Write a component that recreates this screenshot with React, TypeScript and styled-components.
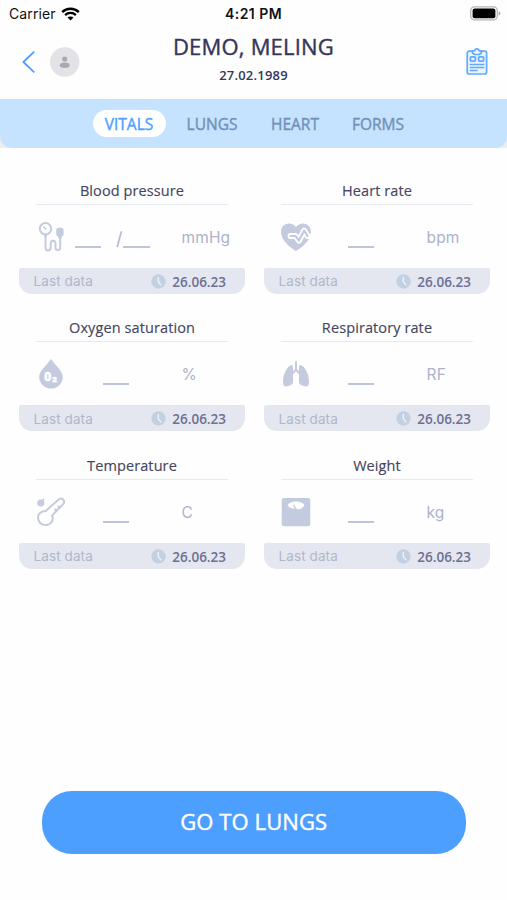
import React from "react";
import styled, { createGlobalStyle } from "styled-components";

const ink = "#35365a";
const blue = "#4d9fff";
const pale = "#c5cbdf";

const GlobalStyle = createGlobalStyle`
  * { box-sizing: border-box; }
  body { margin: 0; background: #fff; }
`;

const Screen = styled.main`
  width: 507px;
  height: 900px;
  background: #fefefe;
  display: flex;
  flex-direction: column;
  overflow: hidden;
  font-family: "Open Sans", sans-serif;
  svg { display: block; flex: none; }
`;

const StatusBar = styled.div`
  height: 27px;
  display: grid;
  grid-template-columns: 1fr auto 1fr;
  align-items: center;
  padding: 0 6px 0 9px;
  font-family: Inter, sans-serif;
  font-size: 14px;
  color: #111;
`;

const Carrier = styled.div`
  display: flex;
  align-items: center;
  gap: 5.5px;
  letter-spacing: 0.1px;
`;

const Clock = styled.div`
  font-weight: 600;
  letter-spacing: 0.45px;
  padding-right: 3px;
`;

const Battery = styled.div`
  justify-self: end;
`;

const Header = styled.header`
  height: 71.5px;
  display: grid;
  grid-template-columns: 80px 1fr 80px;
  padding-top: 7px;
`;

const HeaderLeft = styled.div`
  display: flex;
  align-items: center;
  gap: 14px;
  height: 55px;
  padding-left: 21px;
`;

const HeaderRight = styled.div`
  display: flex;
  align-items: center;
  justify-content: flex-end;
  height: 54px;
  padding-right: 19px;
`;

const Person = styled.div`
  text-align: center;
  color: ${ink};
`;

const Name = styled.h1`
  margin: -1px 0 0;
  font-size: 22px;
  line-height: 27px;
  font-weight: 400;
  letter-spacing: 0.2px;
  -webkit-text-stroke: 0.4px currentColor;
`;

const Birth = styled.div`
  margin-top: 6px;
  font-size: 13px;
  line-height: 18px;
  font-weight: 600;
  letter-spacing: 0.2px;
`;

const TabsBack = styled.div`
  background: #ededf0;
  height: 49px;
`;

const Tabs = styled.nav`
  height: 49px;
  background: #c5e3ff;
  border-radius: 0 0 12px 12px;
  display: flex;
  align-items: center;
  padding-left: 92.5px;
`;

const Tab = styled.button<{ $active?: boolean; $width: number }>`
  border: 0;
  padding: 0;
  width: ${(p) => p.$width}px;
  height: 27px;
  border-radius: 14px;
  background: ${(p) => (p.$active ? "#fff" : "transparent")};
  color: ${(p) => (p.$active ? blue : "#7191b9")};
  font: 400 15.5px/28px "Open Sans", sans-serif;
  -webkit-text-stroke: 0.4px currentColor;
  text-align: center;
`;

const Cards = styled.section`
  display: grid;
  grid-template-columns: 226.5px 226.5px;
  grid-auto-rows: 119px;
  column-gap: 18.5px;
  row-gap: 18.7px;
  padding: 27px 18.5px 0;
`;

const Card = styled.article`
  display: flex;
  flex-direction: column;
`;

const CardTitle = styled.h2`
  margin: 0 17px 0 17.5px;
  height: 30px;
  border-bottom: 1.5px solid #e6e9f0;
  color: #44465f;
  font-size: 14.5px;
  line-height: 32px;
  font-weight: 400;
  text-align: center;
  letter-spacing: 0.1px;
  -webkit-text-stroke: 0.15px currentColor;
`;

const Reading = styled.div`
  height: 63px;
  display: grid;
  grid-template-columns: 36px 91px 1fr;
  grid-template-rows: 63px;
  padding-left: 15px;
`;

const IconSlot = styled.div`
  display: flex;
  align-items: center;
  justify-content: center;
  width: 34px;
  height: 64px;
`;

const Values = styled.div<{ $pair?: boolean }>`
  display: flex;
  align-items: flex-end;
  padding: 0 0 20px ${(p) => (p.$pair ? 5 : 33)}px;
`;

const Blank = styled.span`
  width: 26.5px;
  height: 1.8px;
  flex: none;
  background: #bfc4da;
`;

const Slash = styled.span`
  margin-left: 15px;
  width: 7px;
  height: 18px;
  flex: none;
  color: #aeb4cc;
  font: 400 18px/17px Inter, sans-serif;
`;

const Unit = styled.div`
  padding-left: 21px;
  color: #adb2ca;
  font: 400 15.5px/66px Inter, sans-serif;
  letter-spacing: 0.15px;
`;

const CardFooter = styled.footer`
  height: 26px;
  display: flex;
  align-items: center;
  border-radius: 2px 2px 13px 13px;
  background: #e4e7ef;
  padding: 0 19px 0 15px;
`;

const LastData = styled.span`
  flex: 1;
  padding-top: 1px;
  color: #b0b7cb;
  font: 400 13.5px/26px Inter, sans-serif;
  letter-spacing: 0.1px;
`;

const ClockSlot = styled.span`
  padding-top: 1.5px;
`;

const Stamp = styled.time`
  margin-left: 6px;
  padding-top: 2px;
  color: #6d7094;
  font-size: 13.5px;
  line-height: 26px;
  font-weight: 600;
`;

const Actions = styled.div`
  margin-top: auto;
  padding: 0 41.5px 46px 42px;
`;

const NextButton = styled.button`
  width: 100%;
  height: 63px;
  border: 0;
  border-radius: 30px;
  background: ${blue};
  color: #fff;
  font: 400 22px/60px "Open Sans", sans-serif;
  letter-spacing: 0.1px;
  -webkit-text-stroke: 0.4px currentColor;
  padding: 0 0 3px;
`;

const WifiIcon = () => (
  <svg width="19" height="14" viewBox="0 0 19 14" fill="none">
    <path d="M1.2 5.1C5.8.7 13.2.7 17.8 5.1" stroke="#000" strokeWidth="2.5" />
    <path d="M4.1 8.1C7.1 5.2 11.9 5.2 14.9 8.1" stroke="#000" strokeWidth="2.3" />
    <path d="M9.5 13.6 6.5 10.6c1.7-1.6 4.3-1.6 6 0Z" fill="#000" />
  </svg>
);

const BatteryIcon = () => (
  <svg width="31" height="15" viewBox="0 0 31 15">
    <rect x=".7" y=".9" width="26.6" height="13" rx="3.8" fill="#fff" stroke="#b5b5b5" strokeWidth="1.3" />
    <rect x="2.6" y="2.6" width="22.8" height="9.6" rx="2" fill="#000" />
    <path d="M28.6 5.2c2.4.8 2.4 3.6 0 4.4Z" fill="#aaa" />
  </svg>
);

const BackIcon = () => (
  <svg width="15" height="22" viewBox="0 0 15 22" fill="none" stroke={blue} strokeWidth="1.8" strokeLinecap="round" strokeLinejoin="round">
    <path d="M12.7 1.2 2.4 11l10.3 9.8" />
  </svg>
);

const AvatarIcon = () => (
  <svg width="30" height="30" viewBox="0 0 30 30">
    <circle cx="14.7" cy="15" r="14.7" fill="#e2e2e7" />
    <circle cx="14.7" cy="12" r="2.6" fill="#a9a9b0" />
    <ellipse cx="14.7" cy="18.2" rx="4.9" ry="2.7" fill="#a9a9b0" />
  </svg>
);

const ClipboardIcon = () => (
  <svg width="22" height="27" viewBox="0 0 22 27" fill="none" stroke="#62aaff" strokeWidth="1.7" strokeLinejoin="round">
    <path d="M6.4 3.2H3.2a2 2 0 0 0-2 2V24a2 2 0 0 0 2 2h15.4a2 2 0 0 0 2-2V5.2a2 2 0 0 0-2-2h-3.2" fill="#eaf4ff" />
    <path d="M6.5 2.8h2.2c.2-2.5 4.2-2.5 4.4 0h2.2V5l-2 1.5H8.5L6.5 5Z" fill="#eaf4ff" />
    <rect x="4.4" y="8.8" width="5" height="4.3" rx=".8" />
    <rect x="12.6" y="8.8" width="5" height="4.3" rx=".8" />
    <path d="M4.2 16.5h13.6M4.2 19.5h13.6M4.2 22.5h7" strokeLinecap="round" strokeWidth="1.3" />
  </svg>
);

const PressureIcon = () => (
  <svg width="26" height="32" viewBox="0 0 26 32" fill="none" stroke={pale} strokeWidth="2" strokeLinecap="round">
    <circle cx="7.5" cy="7.8" r="5.7" />
    <path d="m5.6 6 2.2 2" strokeWidth="1.5" />
    <path d="M5.8 13.6h3.6l-.7 2.5H6.5Z" fill={pale} stroke="none" />
    <path d="M7.5 15v11.200c0 4.300 5.200 4.300 5.200 0v-3.600c0-3.800 4.800-3.800 4.800 0v3.600c0 4.300 4.700 3.500 4.700 0V16" />
    <rect x="18.2" y="6.8" width="7.4" height="8.8" rx="2.8" fill={pale} stroke="none" />
    <path d="M19.8 14.5h4.300l-.7 3h-2.900Z" fill={pale} stroke="none" />
  </svg>
);

const HeartIcon = () => (
  <svg width="32" height="30" viewBox="0 0 32 30" fill="none" strokeLinejoin="round" strokeLinecap="round">
    <path d="M16 29C10 25.5 1 18.6 1 9.8 1 1.2 11.5-1.3 16 5.1 20.5-1.3 31 1.2 31 9.8 31 18.6 22 25.5 16 29Z" fill={pale} />
    <path d="M10.5 14h5l3.4 4.600L24.200 8.500l3.300 5.500 3.500 1" stroke="#fff" strokeWidth="5.800" />
    <path d="M10.5 14h5l3.4 4.600L24.200 8.500l3.300 5.500" stroke={pale} strokeWidth="2.200" />
  </svg>
);

const OxygenMark = styled.text`
  font: 900 12px Roboto, sans-serif;
  fill: #fff;
  stroke: #fff;
  stroke-width: 0.5px;
`;

const OxygenSub = styled.text`
  font: 900 8px Roboto, sans-serif;
  fill: #fff;
  stroke: #fff;
  stroke-width: 0.5px;
`;

const OxygenIcon = () => (
  <svg width="26" height="32" viewBox="0 0 26 32">
    <path d="M13 .9C10.5 5.5 1.2 12 1.2 19a11.8 11.5 0 0 0 23.6 0C24.8 12 15.5 5.5 13 .9Z" fill={pale} />
    <OxygenMark x="6.3" y="23.2">0</OxygenMark>
    <OxygenSub x="14.3" y="23.7">2</OxygenSub>
  </svg>
);

const LungsIcon = () => (
  <svg width="28" height="28" viewBox="0 0 28 28" fill="none">
    <path d="M14 2v8.5M14 9.5l-3.5 4M14 9.5l3.5 4" stroke={pale} strokeWidth="2" strokeLinecap="round" />
    <path d="M9.5 5C4.5 6.5 1 15 1 21.5c0 4.5 1.7 5.8 5.2 4.5 3-1.1 4.8-1.2 4.8-4.5V8c0-1.5-.3-3.2-1.5-3ZM18.5 5C23.5 6.5 27 15 27 21.5c0 4.5-1.7 5.8-5.2 4.5-3-1.1-4.8-1.2-4.8-4.5V8c0-1.5.3-3.2 1.5-3Z" fill={pale} />
  </svg>
);

const ThermometerIcon = () => (
  <svg width="30" height="30" viewBox="0 0 30 30" fill="none" stroke={pale} strokeWidth="2" strokeLinecap="round" strokeLinejoin="round">
    <path d="M9.8 14 22.3 2.8c3.9-3.2 7.7 1.2 4.6 4.6L16 18.6c2.2 4.5-1.3 9.4-6.3 9.4-7.7 0-10.5-9.5-3.9-13.1 1.2-.7 2.6-.9 4-.9Z" />
    <path d="m22.6 9.8 1 1.1M19.4 12.6l1 1.1" strokeWidth="2.4" />
    <circle cx="4.8" cy="5.9" r="3.5" fill={pale} stroke="none" />
    <path d="m6 4.5 1.7-2" strokeWidth="1.8" />
  </svg>
);

const ScaleIcon = () => (
  <svg width="30" height="30" viewBox="0 0 30 30">
    <rect x=".7" y=".9" width="28.6" height="28.3" rx="2.5" fill={pale} />
    <path d="M6.5 8.2c2.8-5 14.2-5 17 0-1.4 2.3-3.6 4-6 4.3l-1.1-.8h-3.7c-2.7-.4-4.9-1.5-6.2-3.500Z" fill="#fff" />
    <path d="m14.6 12-2-4.2" stroke={pale} strokeWidth="1.4" />
  </svg>
);

const ClockIcon = () => (
  <svg width="15" height="15" viewBox="0 0 15 15">
    <circle cx="7.5" cy="7.5" r="7.2" fill="#c3d0e2" />
    <path d="M7.3 3.5v4.2l2.6 3.2" fill="none" stroke="#edf1f7" strokeWidth="1.5" strokeLinecap="round" />
  </svg>
);

const vitals: { title: string; unit: string; icon: React.ReactNode; pair?: boolean }[] = [
  { title: "Blood pressure", unit: "mmHg", icon: <PressureIcon />, pair: true },
  { title: "Heart rate", unit: "bpm", icon: <HeartIcon /> },
  { title: "Oxygen saturation", unit: "%", icon: <OxygenIcon /> },
  { title: "Respiratory rate", unit: "RF", icon: <LungsIcon /> },
  { title: "Temperature", unit: "C", icon: <ThermometerIcon /> },
  { title: "Weight", unit: "kg", icon: <ScaleIcon /> },
];

export default function App() {
  return (
    <>
      <GlobalStyle />
      <Screen>
        <StatusBar>
          <Carrier>Carrier <WifiIcon /></Carrier>
          <Clock>4:21 PM</Clock>
          <Battery><BatteryIcon /></Battery>
        </StatusBar>
        <Header>
          <HeaderLeft><BackIcon /><AvatarIcon /></HeaderLeft>
          <Person>
            <Name>DEMO, MELING</Name>
            <Birth>27.02.1989</Birth>
          </Person>
          <HeaderRight><ClipboardIcon /></HeaderRight>
        </Header>
        <TabsBack>
          <Tabs>
            <Tab $active $width={73}>VITALS</Tab>
            <Tab $width={93}>LUNGS</Tab>
            <Tab $width={73}>HEART</Tab>
            <Tab $width={93}>FORMS</Tab>
          </Tabs>
        </TabsBack>
        <Cards>
          {vitals.map((v) => (
            <Card key={v.title}>
              <CardTitle>{v.title}</CardTitle>
              <Reading>
                <IconSlot>{v.icon}</IconSlot>
                <Values $pair={v.pair}>
                  <Blank />
                  {v.pair && <><Slash>/</Slash><Blank /></>}
                </Values>
                <Unit>{v.unit}</Unit>
              </Reading>
              <CardFooter>
                <LastData>Last data</LastData>
                <ClockSlot><ClockIcon /></ClockSlot>
                <Stamp>26.06.23</Stamp>
              </CardFooter>
            </Card>
          ))}
        </Cards>
        <Actions><NextButton>GO TO LUNGS</NextButton></Actions>
      </Screen>
    </>
  );
}
